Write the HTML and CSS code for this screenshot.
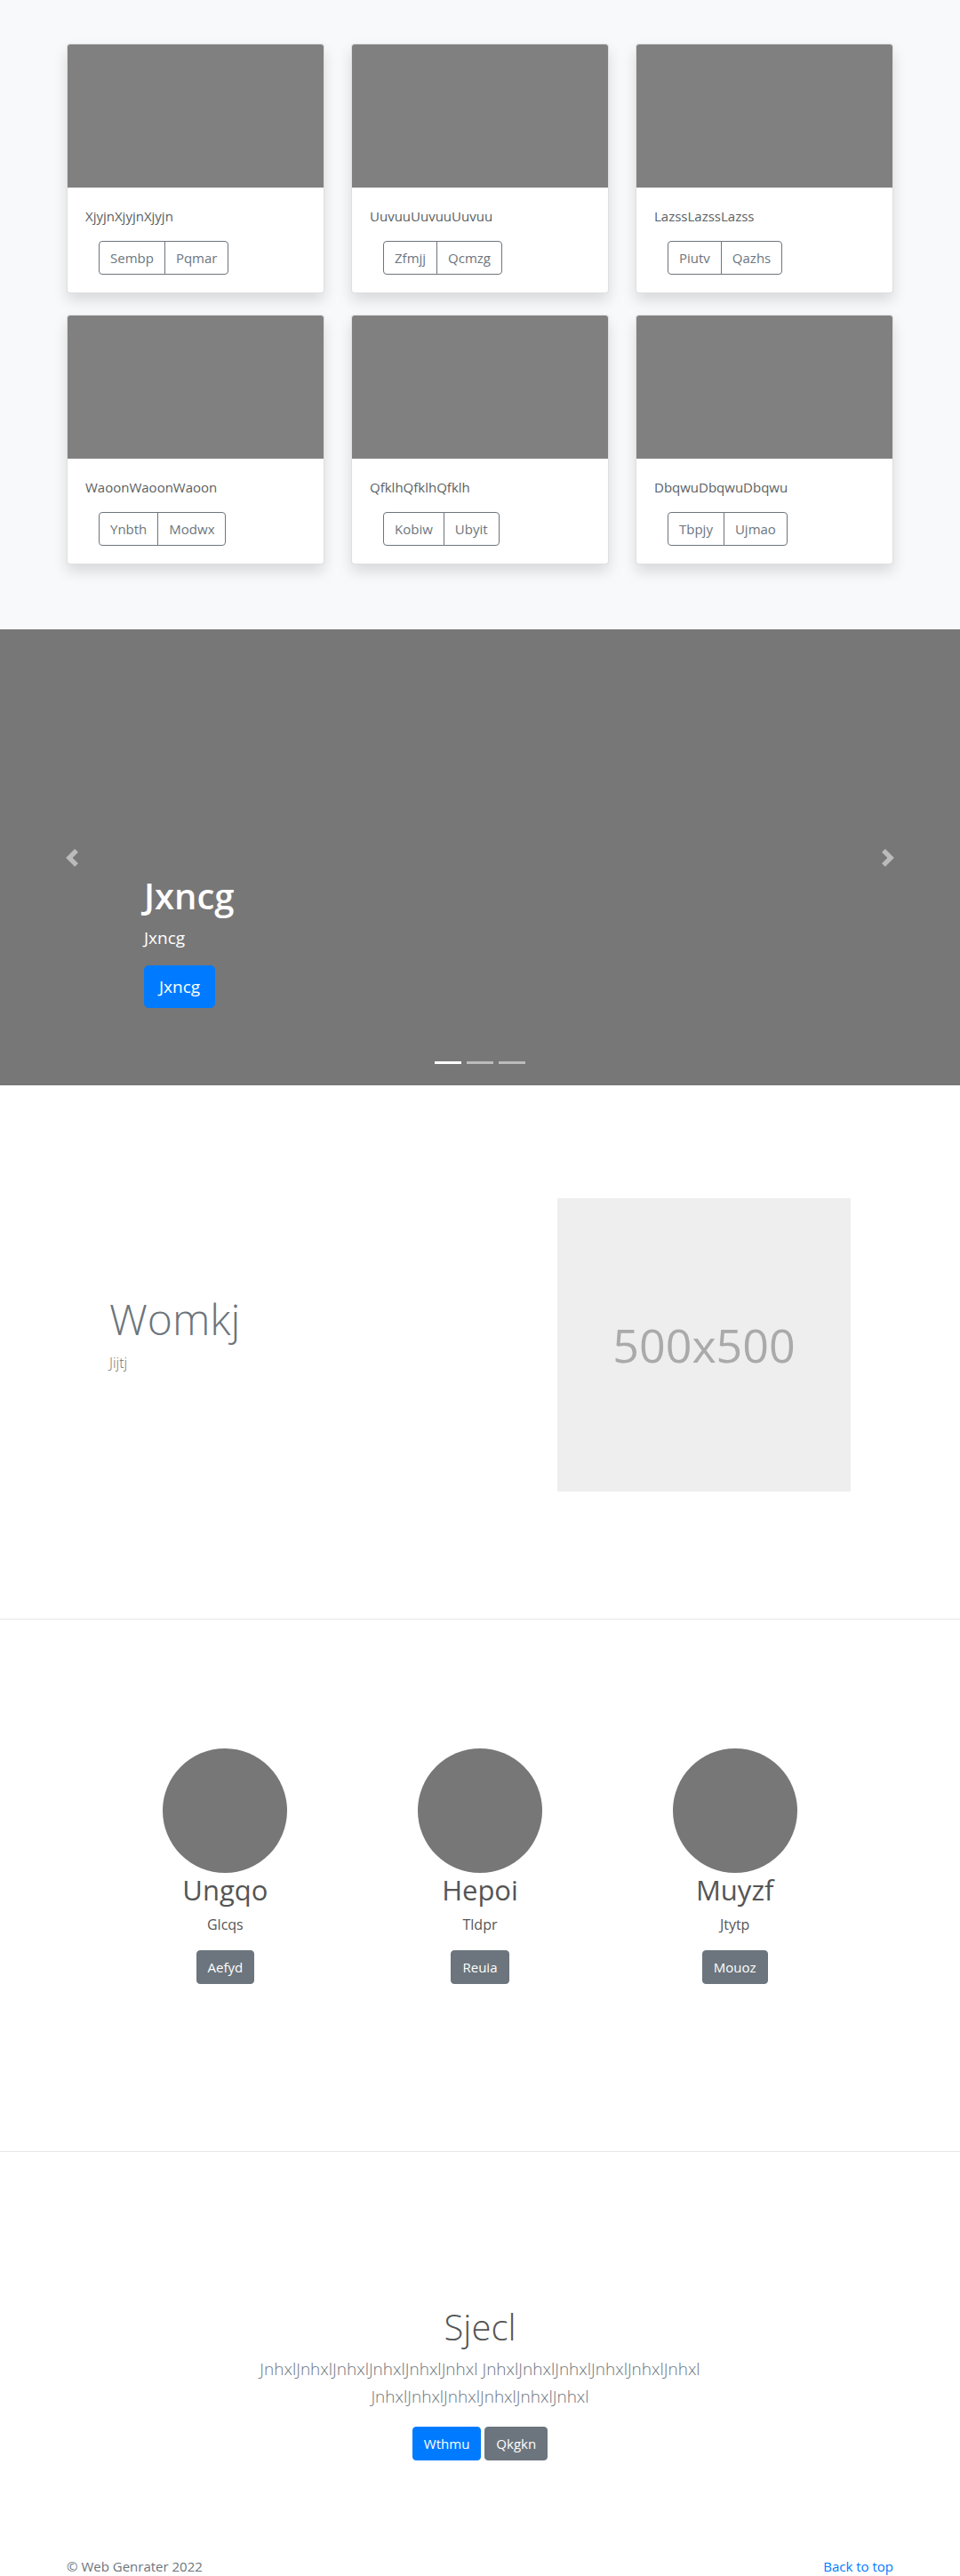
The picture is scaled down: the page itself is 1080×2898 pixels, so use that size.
FILE: index.html
```html
<!DOCTYPE html>
<html lang="en">
<head>
<meta charset="utf-8">
<title>Web Genrater</title>
<link rel="stylesheet" href="styles.css">
</head>
<body>
<main>
  <section class="album">
    <div class="album-grid">
      <div class="card">
        <div class="card-img"></div>
        <div class="card-body">
          <p class="card-text">XjyjnXjyjnXjyjn</p>
          <div class="btn-group"><button class="btn btn-outline">Sembp</button><button class="btn btn-outline">Pqmar</button></div>
        </div>
      </div>
      <div class="card">
        <div class="card-img"></div>
        <div class="card-body">
          <p class="card-text">UuvuuUuvuuUuvuu</p>
          <div class="btn-group"><button class="btn btn-outline">Zfmjj</button><button class="btn btn-outline">Qcmzg</button></div>
        </div>
      </div>
      <div class="card">
        <div class="card-img"></div>
        <div class="card-body">
          <p class="card-text">LazssLazssLazss</p>
          <div class="btn-group"><button class="btn btn-outline">Piutv</button><button class="btn btn-outline">Qazhs</button></div>
        </div>
      </div>
      <div class="card">
        <div class="card-img"></div>
        <div class="card-body">
          <p class="card-text">WaoonWaoonWaoon</p>
          <div class="btn-group"><button class="btn btn-outline">Ynbth</button><button class="btn btn-outline">Modwx</button></div>
        </div>
      </div>
      <div class="card">
        <div class="card-img"></div>
        <div class="card-body">
          <p class="card-text">QfklhQfklhQfklh</p>
          <div class="btn-group"><button class="btn btn-outline">Kobiw</button><button class="btn btn-outline">Ubyit</button></div>
        </div>
      </div>
      <div class="card">
        <div class="card-img"></div>
        <div class="card-body">
          <p class="card-text">DbqwuDbqwuDbqwu</p>
          <div class="btn-group"><button class="btn btn-outline">Tbpjy</button><button class="btn btn-outline">Ujmao</button></div>
        </div>
      </div>
    </div>
  </section>

  <section class="carousel">
    <ol class="indicators">
      <li class="active"></li>
      <li></li>
      <li></li>
    </ol>
    <div class="caption">
      <h1 class="caption-title">Jxncg</h1>
      <p class="caption-sub">Jxncg</p>
      <div class="caption-actions"><a class="btn btn-lg btn-primary" href="#">Jxncg</a></div>
    </div>
    <a class="control control-prev" href="#" aria-label="Previous">
      <svg width="20" height="20" viewBox="0 0 8 8"><path fill="#fff" d="M5.25 0l-4 4 4 4 1.5-1.5L4.25 4l2.5-2.5L5.25 0z"/></svg>
    </a>
    <a class="control control-next" href="#" aria-label="Next">
      <svg width="20" height="20" viewBox="0 0 8 8"><path fill="#fff" d="M2.75 0l-1.5 1.5L3.75 4l-2.5 2.5L2.75 8l4-4-4-4z"/></svg>
    </a>
  </section>

  <section class="feature">
    <div class="feature-row">
      <div class="feature-text">
        <h2 class="feature-title">Womkj</h2>
        <p class="feature-sub">Jijtj</p>
      </div>
      <div class="placeholder">500x500</div>
    </div>
  </section>

  <section class="team">
    <div class="team-row">
      <div class="member">
        <div class="avatar"></div>
        <h2 class="member-name">Ungqo</h2>
        <p class="member-role">Glcqs</p>
        <div><a class="btn btn-secondary" href="#">Aefyd</a></div>
      </div>
      <div class="member">
        <div class="avatar"></div>
        <h2 class="member-name">Hepoi</h2>
        <p class="member-role">Tldpr</p>
        <div><a class="btn btn-secondary" href="#">Reuia</a></div>
      </div>
      <div class="member">
        <div class="avatar"></div>
        <h2 class="member-name">Muyzf</h2>
        <p class="member-role">Jtytp</p>
        <div><a class="btn btn-secondary" href="#">Mouoz</a></div>
      </div>
    </div>
  </section>

  <section class="cta">
    <div class="cta-inner">
      <h1 class="cta-title">Sjecl</h1>
      <p class="lead">JnhxlJnhxlJnhxlJnhxlJnhxlJnhxl JnhxlJnhxlJnhxlJnhxlJnhxlJnhxl JnhxlJnhxlJnhxlJnhxlJnhxlJnhxl</p>
      <div class="cta-actions"><a class="btn btn-primary" href="#">Wthmu</a><a class="btn btn-secondary" href="#">Qkgkn</a></div>
    </div>
  </section>
</main>

<footer class="footer">
  <div class="footer-inner">
    <p class="copy">© Web Genrater 2022</p>
    <p class="top-link"><a href="#">Back to top</a></p>
  </div>
</footer>
</body>
</html>
```

FILE: styles.css
```css
* {
  box-sizing: border-box;
}

html, body {
  margin: 0;
  padding: 0;
}

body {
  font-family: "Open Sans", "Noto Sans", Roboto, sans-serif;
  font-size: 16px;
  line-height: 1.5;
  color: #212529;
  background: #fff;
}

h1, h2, p {
  margin: 0;
}

a {
  text-decoration: none;
}

/* Buttons */
.btn {
  display: inline-block;
  font: inherit;
  font-size: 15px;
  line-height: 24px;
  padding: 6px 12px;
  border: 1px solid transparent;
  border-radius: 4px;
  cursor: pointer;
  text-align: center;
  white-space: nowrap;
}

.btn-outline {
  background: transparent;
  color: #6c757d;
  border-color: #6c757d;
}

.btn-primary {
  background: #007bff;
  border-color: #007bff;
  color: #fff;
}

.btn-secondary {
  background: #6c757d;
  border-color: #6c757d;
  color: #fff;
}

.btn-lg {
  font-size: 19px;
  line-height: 30px;
  padding: 8px 16px;
  border-radius: 5px;
}

/* Album */
.album {
  background: #f8f9fa;
  padding: 49px 0 49px;
}

.album-grid {
  width: 930px;
  margin: 0 auto;
  display: grid;
  grid-template-columns: repeat(3, 290px);
  column-gap: 30px;
  row-gap: 24px;
  padding-bottom: 24px;
}

.card {
  background: #fff;
  border: 1px solid rgba(0, 0, 0, 0.125);
  border-radius: 4px;
  box-shadow: 0 8px 16px rgba(0, 0, 0, 0.13);
  overflow: hidden;
}

.card-img {
  height: 161px;
  background: #808080;
}

.card-body {
  padding: 20px;
}

.card-text {
  color: #5a5f63;
  font-size: 15px;
  line-height: 24px;
  margin-bottom: 16px;
}

.btn-group {
  display: inline-flex;
  margin-left: 15px;
}

.btn-group .btn:first-child {
  border-top-right-radius: 0;
  border-bottom-right-radius: 0;
}

.btn-group .btn + .btn {
  margin-left: -1px;
  border-top-left-radius: 0;
  border-bottom-left-radius: 0;
}

/* Carousel */
.carousel {
  position: relative;
  height: 513px;
  background: #777;
  overflow: hidden;
}

.caption {
  position: absolute;
  left: 15%;
  right: 15%;
  bottom: 51px;
  padding: 20px 0;
  color: #fff;
  text-align: left;
}

.caption-title {
  font-size: 40px;
  line-height: 48px;
  font-weight: 600;
  margin-bottom: 8px;
}

.caption-sub {
  font-size: 19px;
  line-height: 30px;
  margin-bottom: 16px;
}

.caption-actions {
  display: flex;
  margin-bottom: 16px;
}

.control {
  position: absolute;
  top: 0;
  bottom: 0;
  width: 15%;
  display: flex;
  align-items: center;
  justify-content: center;
  opacity: 0.5;
}

.control-prev {
  left: 0;
}

.control-next {
  right: 0;
}

.indicators {
  position: absolute;
  left: 0;
  right: 0;
  bottom: 24px;
  margin: 0;
  padding: 0;
  list-style: none;
  display: flex;
  justify-content: center;
}

.indicators li {
  width: 30px;
  height: 3px;
  margin: 0 3px;
  background: rgba(255, 255, 255, 0.5);
}

.indicators li.active {
  background: #fff;
}

/* Feature */
.feature {
  padding: 127px 123px 143px;
  border-bottom: 1px solid #e6e6e6;
}

.feature-row {
  display: grid;
  grid-template-columns: 1fr 330px;
  align-items: center;
}

.feature-title {
  font-size: 48px;
  line-height: 57.6px;
  font-weight: 300;
  color: #6c757d;
  margin-bottom: 8px;
}

.feature-sub {
  font-size: 16px;
  line-height: 24px;
  font-weight: 300;
  color: #6c757d;
  margin-bottom: 26px;
}

.placeholder {
  width: 330px;
  height: 330px;
  background: #eee;
  color: #aaa;
  font-size: 52px;
  display: flex;
  align-items: center;
  justify-content: center;
}

/* Team */
.team {
  padding: 145px 0 188px;
  border-bottom: 1px solid #e6e6e6;
}

.team-row {
  width: 860px;
  margin: 0 auto;
  display: grid;
  grid-template-columns: repeat(3, 1fr);
}

.member {
  display: flex;
  flex-direction: column;
  align-items: center;
  text-align: center;
}

.avatar {
  width: 140px;
  height: 140px;
  border-radius: 50%;
  background: #777;
}

.member-name {
  font-size: 31px;
  line-height: 38px;
  font-weight: 400;
  color: #555;
  margin-bottom: 8px;
}

.member-role {
  font-size: 16px;
  line-height: 24px;
  color: #555;
  margin-bottom: 17px;
}

/* CTA */
.cta {
  padding: 173px 0 48px;
  text-align: center;
}

.cta-inner {
  width: 610px;
  margin: 0 auto;
}

.cta-title {
  font-size: 40px;
  line-height: 48px;
  font-weight: 300;
  color: #555;
  margin-bottom: 8px;
}

.lead {
  font-size: 19px;
  line-height: 31px;
  font-weight: 300;
  color: #6c757d;
  margin-bottom: 18px;
}

.cta-actions {
  display: flex;
  justify-content: center;
  gap: 4px;
  margin: 8px 0;
}

/* Footer */
.footer {
  padding: 52px 0 48px;
  color: #6c757d;
  font-size: 15px;
}

.footer-inner {
  width: 930px;
  margin: 0 auto;
  display: flex;
  justify-content: space-between;
}

.top-link a {
  color: #007bff;
}
```
